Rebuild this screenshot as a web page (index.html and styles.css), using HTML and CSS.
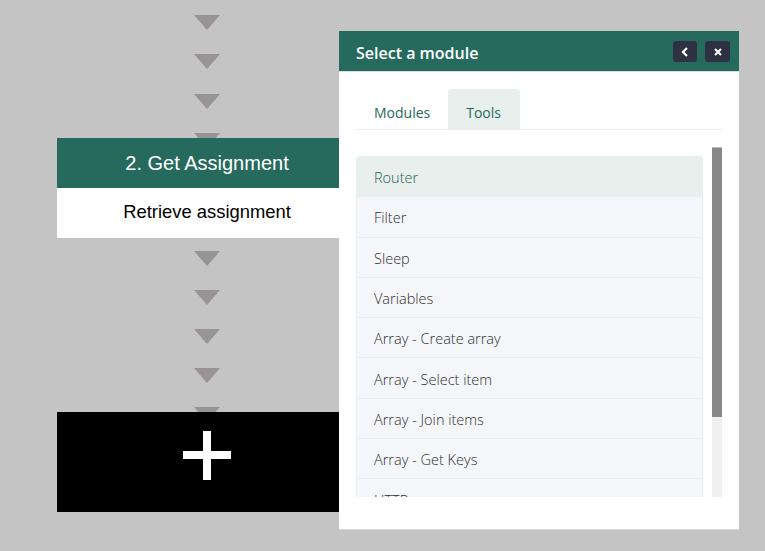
FILE: index.html
```html
<!DOCTYPE html>
<html>
<head>
<meta charset="utf-8">
<link rel="stylesheet" href="styles.css">
</head>
<body>
<div class="canvas">
  <div class="flow">
    <div class="connector connector-top">
      <span class="tri"></span><span class="tri"></span><span class="tri"></span><span class="tri"></span>
    </div>
    <div class="card">
      <div class="card-head">2. Get Assignment</div>
      <div class="card-body">Retrieve assignment</div>
    </div>
    <div class="connector connector-mid">
      <span class="tri"></span><span class="tri"></span><span class="tri"></span><span class="tri"></span><span class="tri"></span>
    </div>
    <div class="add-box">
      <svg width="48" height="49" viewBox="0 0 48 49"><rect x="0" y="20" width="48" height="8" fill="#fff"/><rect x="20" y="0" width="8" height="49" fill="#fff"/></svg>
    </div>
  </div>

  <div class="panel">
    <div class="panel-head">
      <div class="panel-title">Select a module</div>
      <div class="panel-actions">
        <button class="icon-btn" aria-label="Back"><svg width="8" height="10" viewBox="0 0 8 10"><path d="M6 1 L2 5 L6 9" fill="none" stroke="#fff" stroke-width="2.2"/></svg></button>
        <button class="icon-btn" aria-label="Close"><svg width="8" height="8" viewBox="0 0 8 8"><path d="M1 1 L7 7 M7 1 L1 7" fill="none" stroke="#fff" stroke-width="2"/></svg></button>
      </div>
    </div>
    <div class="panel-body">
      <div class="tabs">
        <div class="tab">Modules</div>
        <div class="tab tab-active">Tools</div>
      </div>
      <div class="scroll-area">
        <div class="scroller">
          <ul class="list">
            <li class="item item-active">Router</li>
            <li class="item">Filter</li>
            <li class="item">Sleep</li>
            <li class="item">Variables</li>
            <li class="item">Array - Create array</li>
            <li class="item">Array - Select item</li>
            <li class="item">Array - Join items</li>
            <li class="item">Array - Get Keys</li>
            <li class="item">HTTP</li>
          </ul>
        </div>
        <div class="scrollbar"><div class="thumb"></div></div>
      </div>
    </div>
  </div>
</div>
</body>
</html>
```

FILE: styles.css
```css
* { box-sizing: border-box; }
html, body { margin: 0; padding: 0; }
body {
  background: #c4c4c4;
  width: 765px;
  height: 551px;
  overflow: hidden;
  font-family: "Liberation Sans", Arial, sans-serif;
}
.canvas { position: relative; width: 765px; height: 551px; }

.flow { width: 300px; margin-left: 57px; display: flex; flex-direction: column; }
.connector {
  display: flex; flex-direction: column; align-items: center;
  overflow: hidden;
}
.connector-top { height: 138px; padding-top: 15px; gap: 24.4px; }
.connector-mid { height: 174px; padding-top: 13px; gap: 24px; }
.tri {
  flex: none;
  width: 0; height: 0;
  border-left: 13px solid transparent;
  border-right: 13px solid transparent;
  border-top: 15px solid #989494;
}
.card-head {
  height: 50px; background: #256a5c; color: #fff;
  font-size: 20px; display: flex; align-items: center; justify-content: center;
}
.card-body {
  height: 50px; background: #fff; color: #000;
  font-size: 18.4px; display: flex; align-items: center; justify-content: center;
  padding-bottom: 2px;
}
.add-box {
  height: 100px; background: #000;
  display: flex; align-items: flex-start; justify-content: center;
  padding-top: 19px;
}

.panel {
  position: absolute; left: 339px; top: 31px;
  width: 400px; height: 499px;
  background: #fff;
  font-family: "Open Sans", sans-serif;
  display: flex; flex-direction: column;
  border-bottom: 1px solid #d8d8d8;
}
.panel-head {
  height: 41px; background: #256a5c;
  border-bottom: 1px solid #d6e3df;
  display: flex; align-items: center; justify-content: space-between;
  padding: 0 9px 0 17px;
  flex: none;
}
.panel-title { color: #fff; font-weight: 600; font-size: 16px; padding-top: 4px; }
.panel-actions { display: flex; gap: 8px; margin-top: 1px; }
.icon-btn {
  width: 24px; height: 21px; border: 0; padding: 0; border-radius: 3px;
  background: #2d3142; display: flex; align-items: center; justify-content: center;
}
.icon-btn + .icon-btn { width: 25px; }

.panel-body { padding: 17px 17px 0 17px; display: flex; flex-direction: column; }
.tabs {
  display: flex; width: 366px;
  border-bottom: 1px solid #e7eeec;
}
.tab {
  height: 40px; padding: 6px 18px 0 18px; display: flex; align-items: center;
  color: #256a5c; font-size: 14px; font-weight: 400;
  border-radius: 3px 3px 0 0;
}
.tab-active { background: #e8efed; padding-right: 19px; }

.scroll-area {
  margin-top: 17px;
  width: 366px; height: 350px;
  display: flex;
}
.scroller {
  flex: 1;
  height: 350px;
  overflow: hidden;
  padding-top: 9px;
}
.scrollbar {
  width: 10px; height: 350px; background: #f0f0f0;
  flex: none;
}
.thumb { height: 270px; background: #888; border-top: 1px solid #bdbdbd; }
.list {
  list-style: none; margin: 0; padding: 0;
  width: 347px;
  border: 1px solid #e8edf1; border-bottom: 0;
  border-radius: 4px 4px 0 0;
  overflow: hidden;
}
.item {
  height: 40.3px; padding: 2px 0 0 17px;
  display: flex; align-items: center;
  background: #f5f6fa; color: #2e2e2e;
  font-size: 14.5px; font-weight: 300;
  border-bottom: 1px solid #e9eef2;
}
.item-active { background: #e8efec; color: #1f6354; }
```
